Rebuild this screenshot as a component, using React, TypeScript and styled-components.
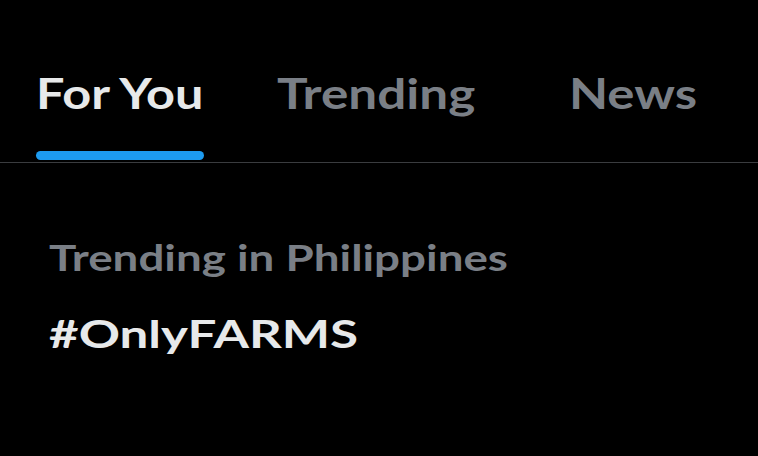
import React, { useState } from 'react';
import styled, { createGlobalStyle } from 'styled-components';

const GlobalStyle = createGlobalStyle`
  html, body {
    margin: 0;
    padding: 0;
    background: #000;
  }
  body {
    font-family: Lato, "Open Sans", sans-serif;
    -webkit-font-smoothing: antialiased;
  }
`;

const Page = styled.div`
  width: 758px;
  height: 456px;
  background: #000;
  overflow: hidden;
`;

const TabBar = styled.nav`
  display: flex;
  align-items: stretch;
  height: 162px;
  padding-left: 36px;
  border-bottom: 1px solid #3a3c3f;
  box-sizing: content-box;
`;

const Tab = styled.button<{ $active?: boolean; $width: number; $gap: number }>`
  position: relative;
  display: flex;
  flex-direction: column;
  justify-content: flex-start;
  align-items: flex-start;
  width: ${p => p.$width}px;
  margin-right: ${p => p.$gap}px;
  padding: 68px 0 0;
  border: none;
  background: none;
  cursor: pointer;
  white-space: nowrap;
  font-family: inherit;
  font-weight: 700;
  font-size: 42px;
  line-height: 50px;
  color: ${p => (p.$active ? '#e7e9ea' : '#7a7f86')};
`;

// the reference face is wider than Lato, so labels get a horizontal stretch
const Wide = styled.span<{ $x: number }>`
  display: inline-block;
  white-space: nowrap;
  transform: scaleX(${p => p.$x});
  transform-origin: 0 50%;
`;

const Indicator = styled.span`
  position: absolute;
  left: 0;
  right: 0;
  bottom: 2px;
  height: 9px;
  border-radius: 5px;
  background: #1d9bf0;
`;

const Trend = styled.section`
  padding: 72px 0 0 49px;
`;

const TrendContext = styled.div`
  font-weight: 700;
  font-size: 36px;
  line-height: 44px;
  color: #7a7f86;
`;

const TrendName = styled.div`
  margin-top: 31px;
  font-weight: 700;
  font-size: 38px;
  line-height: 46px;
  color: #e7e9ea;
`;

const tabs = [
  { label: 'For You', width: 168, gap: 73, stretch: 1.2 },
  { label: 'Trending', width: 198, gap: 94, stretch: 1.22 },
  { label: 'News', width: 127, gap: 0, stretch: 1.21 },
];

export default function App() {
  const [active, setActive] = useState(0);
  return (
    <Page>
      <GlobalStyle />
      <TabBar>
        {tabs.map((t, i) => (
          <Tab
            key={t.label}
            $active={i === active}
            $width={t.width}
            $gap={t.gap}
            onClick={() => setActive(i)}
          >
            <Wide $x={t.stretch}>{t.label}</Wide>
            {i === active && <Indicator />}
          </Tab>
        ))}
      </TabBar>
      <Trend>
        <TrendContext>
          <Wide $x={1.27}>Trending in Philippines</Wide>
        </TrendContext>
        <TrendName>
          <Wide $x={1.345}>#OnlyFARMS</Wide>
        </TrendName>
      </Trend>
    </Page>
  );
}
